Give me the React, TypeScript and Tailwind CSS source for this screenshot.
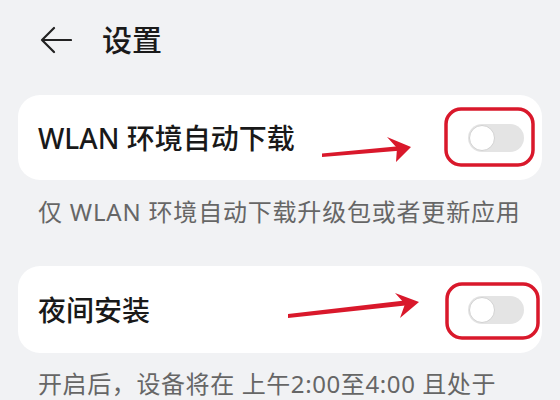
// Settings screen with two toggles, annotated with red arrows + boxes

function Toggle() {
  return (
    <div className="flex h-[28px] w-[56px] items-center rounded-full bg-[#e4e4e4] pl-[1px]">
      <div className="h-[26px] w-[26px] rounded-full border border-[#d2d2d2] bg-white" />
    </div>
  );
}

function Row({ label }: { label: string }) {
  return (
    <div className="flex items-center justify-between rounded-[22px] bg-white pl-[20px] pr-[18px]">
      <span className="text-[28px] font-medium leading-none text-[#191919]">{label}</span>
      <Toggle />
    </div>
  );
}

export default function App() {
  return (
    <div
      className="relative h-[400px] w-[560px] overflow-hidden bg-[#f1f2f4] px-[18px]"
      style={{ fontFamily: '"Noto Sans", "Noto Sans CJK SC", sans-serif' }}
    >
      {/* Header */}
      <div className="flex h-[80px] items-center gap-[30px] pl-[22px]">
        <svg width="32" height="28" viewBox="0 0 32 28" fill="none" stroke="#222" strokeWidth="2.2" strokeLinecap="round" strokeLinejoin="round">
          <path d="M2 14h29M14 2 2 14l12 12" />
        </svg>
        <h1 className="text-[30px] font-medium leading-none text-[#1a1a1a]">设置</h1>
      </div>

      <div className="mt-[15px] flex h-[85px] flex-col [&>div]:h-full">
        <Row label="WLAN 环境自动下载" />
      </div>
      <p className="mt-[16px] whitespace-nowrap px-[20px] text-[24px] leading-[32px] tracking-[0.8px] text-[#666]">
        仅 WLAN 环境自动下载升级包或者更新应用
      </p>

      <div className="mt-[38px] flex h-[87px] flex-col [&>div]:h-full">
        <Row label="夜间安装" />
      </div>
      <p className="mt-[15px] whitespace-nowrap px-[20px] text-[24px] leading-[32px] tracking-[0.6px] text-[#666]">
        开启后，设备将在 上午2:00至4:00 且处于
      </p>

      {/* Annotations */}
      <svg className="pointer-events-none absolute left-0 top-0" width="560" height="400" viewBox="0 0 560 400">
        <g fill="#d9182b">
          <polygon points="322,153.5 322,157 402,150.5 401,146" />
          <polygon points="411,147 387,137 397,148 396,162" />
          <polygon points="288,314 288,318 410,305 409,300" />
          <polygon points="419,302 395,293 405,304 400,318" />
        </g>
        <g fill="none" stroke="#d9182b" strokeWidth="3.5">
          <rect x="446" y="109" width="87" height="56" rx="15" />
          <rect x="447" y="284" width="91" height="54" rx="15" />
        </g>
      </svg>
    </div>
  );
}
